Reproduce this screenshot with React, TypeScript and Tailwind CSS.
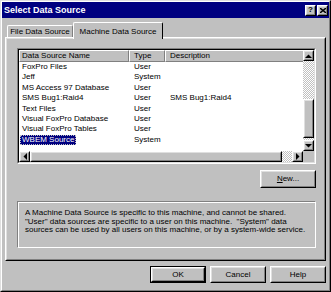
import React from 'react';

type Row = { name: string; type: string; desc?: string; selected?: boolean };

const rows: Row[] = [
  { name: 'FoxPro Files', type: 'User' },
  { name: 'Jeff', type: 'System' },
  { name: 'MS Access 97 Database', type: 'User' },
  { name: 'SMS Bug1:Raid4', type: 'User', desc: 'SMS Bug1:Raid4' },
  { name: 'Text Files', type: 'User' },
  { name: 'Visual FoxPro Database', type: 'User' },
  { name: 'Visual FoxPro Tables', type: 'User' },
  { name: 'WBEM Source', type: 'System', selected: true },
];

// classic raised 3d edge
const Raised: React.FC<{ className?: string; children?: React.ReactNode }> = ({ className = '', children }) => (
  <div className={`border-t border-l border-r border-b border-t-white border-l-white border-r-black border-b-black ${className}`}>
    <div className="h-full w-full border-t border-l border-r border-b border-t-[#dfdfdf] border-l-[#dfdfdf] border-r-[#808080] border-b-[#808080] bg-[#c0c0c0] flex items-center justify-center">
      {children}
    </div>
  </div>
);

const Button: React.FC<{ label: React.ReactNode; isDefault?: boolean; h?: string }> = ({ label, isDefault, h = 'h-[17px]' }) =>
  isDefault ? (
    <div className={`w-[56px] ${h} border border-black`}>
      <Raised className="h-full w-full">{label}</Raised>
    </div>
  ) : (
    <Raised className={`w-[56px] ${h}`}>{label}</Raised>
  );

const Arrow: React.FC<{ dir: 'up' | 'down' | 'left' | 'right' }> = ({ dir }) => {
  const pts = {
    up: '0,4 7,4 3.5,0.5',
    down: '0,0 7,0 3.5,3.5',
    left: '4,0 4,7 0.5,3.5',
    right: '0,0 0,7 3.5,3.5',
  }[dir];
  const vertical = dir === 'up' || dir === 'down';
  return (
    <svg width={vertical ? 7 : 4} height={vertical ? 4 : 7} viewBox={vertical ? '0 0 7 4' : '0 0 4 7'}>
      <polygon points={pts} fill="#000" />
    </svg>
  );
};

const Dither = 'bg-[repeating-conic-gradient(#c0c0c0_0_25%,#ffffff_0_50%)] bg-[length:2px_2px]';

export default function App() {
  return (
    <div className="w-[331px] h-[292px] bg-[#c0c0c0] font-['Liberation_Sans',Arial,sans-serif] text-[8px] text-black select-none">
      {/* window frame */}
      <div className="h-full w-full border-t border-l border-r border-b border-t-[#dfdfdf] border-l-[#dfdfdf] border-r-black border-b-black">
        <div className="h-full w-full border-t border-l border-r border-b border-t-white border-l-white border-r-[#808080] border-b-[#808080] flex flex-col">
          {/* title bar */}
          <div className="h-[16px] bg-[#000080] flex items-center justify-between pl-[2px] pr-[1px]">
            <span className="text-white font-bold text-[9px] leading-none">Select Data Source</span>
            <div className="flex gap-[1px]">
              <Raised className="w-[11px] h-[11px]">
                <span className="font-bold text-[8px] leading-none">?</span>
              </Raised>
              <Raised className="w-[11px] h-[11px]">
                <svg width="6" height="5" viewBox="0 0 6 5">
                  <path d="M0 0L6 5M6 0L0 5" stroke="#000" strokeWidth="1.4" />
                </svg>
              </Raised>
            </div>
          </div>

          {/* tabs */}
          <div className="h-[19px] flex items-end pl-[5px]">
            <div className="w-[66px] h-[12px] border-t border-l border-r border-t-white border-l-white border-r-[#808080] rounded-t-[2px] flex items-center justify-center pt-[1px]">
              File Data Source
            </div>
            <div className="relative z-10 w-[90px] h-[17px] -mb-[2px] bg-[#c0c0c0] border-t border-l border-r border-t-white border-l-white border-r-black rounded-t-[2px] flex justify-center pt-[3px]">
              Machine Data Source
            </div>
          </div>

          {/* tab panel */}
          <div className="ml-[3px] w-[321px] h-[224px] border-t border-l border-r border-b border-t-white border-l-white border-r-black border-b-black">
            <div className="h-full border-t border-l border-r border-b border-t-[#dfdfdf] border-l-[#dfdfdf] border-r-[#808080] border-b-[#808080] pl-[10px] pr-[8px] pt-[9px] flex flex-col">
              {/* list view */}
              <div className="w-[299px] h-[116px] border-t border-l border-r border-b border-t-[#808080] border-l-[#808080] border-r-white border-b-white">
                <div className="h-full border-t border-l border-r border-b border-t-black border-l-black border-r-[#dfdfdf] border-b-[#dfdfdf] bg-white flex flex-col">
                  <div className="flex h-[101px]">
                    <div className="flex-1 flex flex-col">
                      {/* header */}
                      <div className="flex h-[12px]">
                        <div className="w-[110px] border-t border-l border-r border-b border-t-white border-l-white border-r-[#808080] border-b-[#808080] bg-[#c0c0c0] pl-[2px] leading-[10px]">
                          Data Source Name
                        </div>
                        <div className="w-[36px] border-t border-l border-r border-b border-t-white border-l-white border-r-[#808080] border-b-[#808080] bg-[#c0c0c0] pl-[4px] leading-[10px]">
                          Type
                        </div>
                        <div className="flex-1 border-t border-l border-b border-t-white border-l-white border-b-[#808080] bg-[#c0c0c0] pl-[4px] leading-[10px]">
                          Description
                        </div>
                      </div>
                      {/* rows */}
                      {rows.map((r) => (
                        <div key={r.name} className="flex h-[10.4px] leading-[10.4px] whitespace-nowrap">
                          <div className="w-[110px] pl-[1px]">
                            {r.selected ? (
                              <span className="bg-[#000080] text-white px-[2px] outline-1 outline-dotted outline-[#c0c0c0] -outline-offset-1 inline-block leading-[10px]">
                                {r.name}
                              </span>
                            ) : (
                              <span className="px-[2px]">{r.name}</span>
                            )}
                          </div>
                          <div className="w-[36px] pl-[5px]">{r.type}</div>
                          <div className="flex-1 pl-[5px]">{r.desc ?? ''}</div>
                        </div>
                      ))}
                    </div>
                    {/* vertical scrollbar */}
                    <div className="w-[11px] flex flex-col">
                      <Raised className="h-[11px]">
                        <Arrow dir="up" />
                      </Raised>
                      <div className={`flex-1 flex flex-col ${Dither}`}>
                        <div className="flex-1" />
                        <Raised className="h-[39px]" />
                        <div className="h-[2px]" />
                      </div>
                      <Raised className="h-[11px]">
                        <Arrow dir="down" />
                      </Raised>
                    </div>
                  </div>
                  {/* horizontal scrollbar */}
                  <div className="flex h-[11px]">
                    <Raised className="w-[11px]">
                      <Arrow dir="left" />
                    </Raised>
                    <Raised className="flex-1" />
                    <div className={`w-[10px] ${Dither}`} />
                    <Raised className="w-[11px]">
                      <Arrow dir="right" />
                    </Raised>
                    <div className="w-[11px] bg-[#c0c0c0]" />
                  </div>
                </div>
              </div>

              {/* New button */}
              <div className="flex justify-end mt-[6px]">
                <Button
                  h="h-[18px]"
                  label={
                    <span>
                      <span className="underline">N</span>ew...
                    </span>
                  }
                />
              </div>

              {/* description */}
              <div className="mt-[13px] w-[299px] h-[47px] border-t border-l border-r border-b border-t-[#808080] border-l-[#808080] border-r-white border-b-white">
                <div className="h-full border-t border-l border-t-white border-l-white pl-[6px] pt-[6px] leading-[8.7px] whitespace-nowrap">
                  <div>A Machine Data Source is specific to this machine, and cannot be shared.</div>
                  <div>"User" data sources are specific to a user on this machine.&nbsp; "System" data</div>
                  <div>sources can be used by all users on this machine, or by a system-wide service.</div>
                </div>
              </div>
            </div>
          </div>

          {/* dialog buttons */}
          <div className="flex justify-end gap-[4px] pr-[3px] mt-[5px]">
            <Button label="OK" isDefault />
            <Button label="Cancel" />
            <Button label="Help" />
          </div>
        </div>
      </div>
    </div>
  );
}
